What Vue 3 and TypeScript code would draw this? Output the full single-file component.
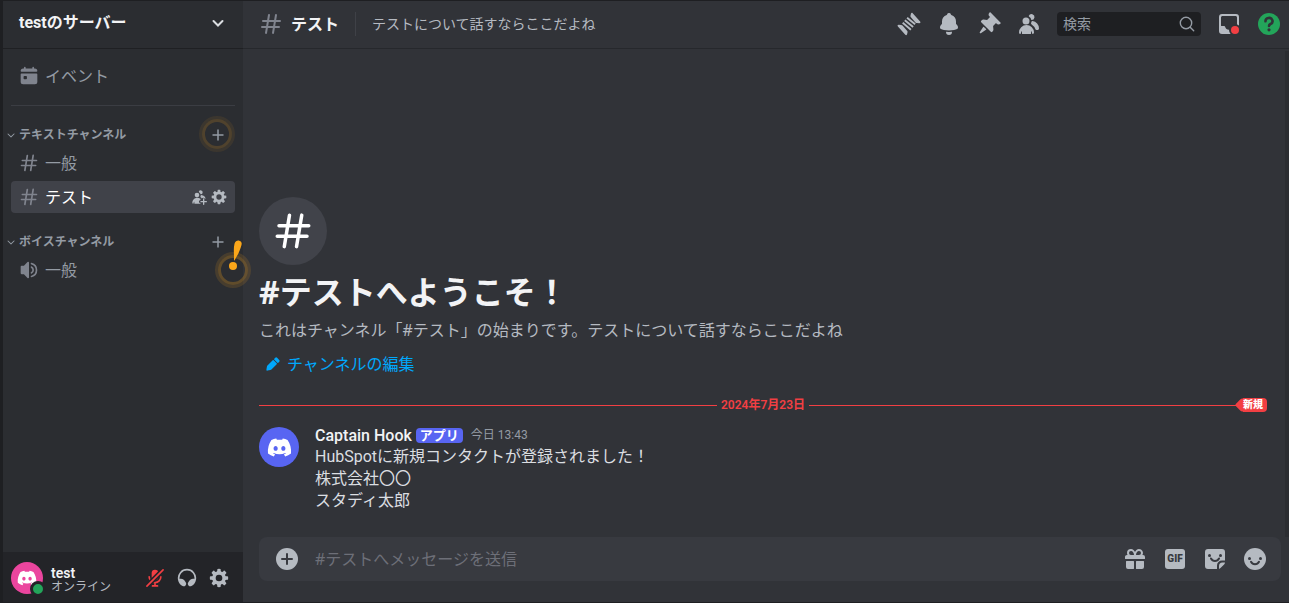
<script setup lang="ts">
import { ref } from 'vue'

interface Channel {
  id: string
  name: string
  kind: 'text' | 'voice'
}

interface Category {
  name: string
  hinted: boolean
  channels: Channel[]
}

interface Tool {
  label: string
  paths: string[]
}

const icons = {
  hash: 'M10.99 3.16A1 1 0 1 0 9 2.84L8.15 8H4a1 1 0 0 0 0 2h3.82l-.67 4H3a1 1 0 1 0 0 2h3.82l-.8 4.84a1 1 0 0 0 1.97.32L8.85 16h4.97l-.8 4.84a1 1 0 0 0 1.97.32l.86-5.16H20a1 1 0 1 0 0-2h-3.82l.67-4H21a1 1 0 1 0 0-2h-3.82l.8-4.84a1 1 0 1 0-1.97-.32L15.15 8h-4.97l.8-4.84ZM14.15 14l.67-4H9.85l-.67 4h4.97Z',
  speaker:
    'M12 3a1 1 0 0 0-1-1h-.06a1 1 0 0 0-.74.32L5.92 7H3a1 1 0 0 0-1 1v8a1 1 0 0 0 1 1h2.92l4.28 4.68a1 1 0 0 0 .74.32H11a1 1 0 0 0 1-1V3ZM15.1 20.75c-.58.14-1.1-.33-1.1-.92v-.03c0-.5.37-.92.85-1.05a7 7 0 0 0 0-13.5A1.11 1.11 0 0 1 14 4.2v-.03c0-.6.52-1.06 1.1-.92a9 9 0 0 1 0 17.5ZM15.16 16.51c-.57.28-1.16-.2-1.16-.83v-.14c0-.43.28-.8.63-1.02a3 3 0 0 0 0-5.04c-.35-.23-.63-.6-.63-1.02v-.14c0-.63.59-1.1 1.16-.83a5 5 0 0 1 0 9.02Z',
  gear: 'M10.56 1.1c-.46.05-.7.53-.64.98.18 1.16-.19 2.2-.98 2.53-.8.33-1.79-.15-2.49-1.1-.27-.36-.78-.52-1.14-.24-.77.59-1.45 1.27-2.04 2.04-.28.36-.12.87.24 1.14.96.7 1.43 1.7 1.1 2.49-.33.8-1.37 1.16-2.53.98-.45-.07-.93.18-.99.64a11.1 11.1 0 0 0 0 2.88c.06.46.54.7.99.64 1.16-.18 2.2.19 2.53.98.33.8-.14 1.79-1.1 2.49-.36.27-.52.78-.24 1.14.59.77 1.27 1.45 2.04 2.04.36.28.87.12 1.14-.24.7-.95 1.7-1.43 2.49-1.1.8.33 1.16 1.37.98 2.53-.07.45.18.93.64.99a11.1 11.1 0 0 0 2.88 0c.46-.06.7-.54.64-.99-.18-1.16.19-2.2.98-2.53.8-.33 1.79.14 2.49 1.1.27.36.78.52 1.14.24.77-.59 1.45-1.27 2.04-2.04.28-.36.12-.87-.24-1.14-.96-.7-1.43-1.7-1.1-2.49.33-.8 1.37-1.16 2.53-.98.45.07.93-.18.99-.64a11.1 11.1 0 0 0 0-2.88c-.06-.46-.54-.7-.99-.64-1.16.18-2.2-.19-2.53-.98-.33-.8.14-1.79 1.1-2.49.36-.27.52-.78.24-1.14a11.07 11.07 0 0 0-2.04-2.04c-.36-.28-.87-.12-1.14.24-.7.96-1.7 1.43-2.49 1.1-.8-.33-1.16-1.37-.98-2.53.07-.45-.18-.93-.64-.99a11.1 11.1 0 0 0-2.88 0ZM16 12a4 4 0 1 1-8 0 4 4 0 0 1 8 0Z',
  bell: 'M9.7 2.89c.18-.07.32-.24.37-.43a2 2 0 0 1 3.86 0c.05.2.19.36.38.43A7 7 0 0 1 19 9.5v2.09c0 .12.05.24.13.33l1.1 1.22a3 3 0 0 1 .77 2.01v.28c0 .67-.34 1.29-.95 1.56-1.31.6-4 1.51-8.05 1.51-4.05 0-6.74-.91-8.05-1.5-.61-.28-.95-.9-.95-1.57v-.28a3 3 0 0 1 .77-2l1.1-1.23a.5.5 0 0 0 .13-.33V9.5a7 7 0 0 1 4.7-6.61ZM9.18 19.84A.16.16 0 0 0 9 20a3 3 0 1 0 6 0c0-.1-.09-.17-.18-.16a24.86 24.86 0 0 1-5.64 0Z',
  pin: 'M19.38 11.38a3 3 0 0 0 4.24 0l.03-.03a.5.5 0 0 0 0-.7L13.35.35a.5.5 0 0 0-.7 0l-.03.03a3 3 0 0 0 0 4.24L13 5l-2.92 2.92-3.65-.34a2 2 0 0 0-1.6.58l-.62.63a1 1 0 0 0 0 1.42l9.58 9.58a1 1 0 0 0 1.42 0l.63-.63a2 2 0 0 0 .58-1.6l-.34-3.64L19 11l.38.38ZM9.07 17.07a.5.5 0 0 1-.08.77l-5.15 3.43a.5.5 0 0 1-.63-.06l-.42-.42a.5.5 0 0 1-.06-.63L6.16 15a.5.5 0 0 1 .77-.08l2.14 2.14Z',
  membersBack:
    'M14.5 8a3 3 0 1 0-2.7-4.3c-.2.4.06.86.44 1.12a5 5 0 0 1 2.14 3.08c.01.06.06.1.12.1ZM18.44 17.27c.15.43.54.73 1 .73h1.06c.83 0 1.5-.67 1.5-1.5a7.5 7.5 0 0 0-6.5-7.43c-.55-.08-.99.38-1.1.92-.06.3-.15.6-.26.87-.23.58-.05 1.3.47 1.63a9.53 9.53 0 0 1 3.83 4.78Z',
  membersFront:
    'M12.5 9a3.5 3.5 0 1 1-7 0 3.5 3.5 0 0 1 7 0ZM2 20.5a7.5 7.5 0 0 1 15 0c0 .83-.67 1.5-1.5 1.5a.2.2 0 0 1-.2-.16c-.2-.96-.56-1.87-.88-2.54-.1-.23-.42-.15-.42.1v2.1a.5.5 0 0 1-.5.5h-8a.5.5 0 0 1-.5-.5v-2.1c0-.25-.31-.33-.42-.1-.32.67-.67 1.58-.88 2.54a.2.2 0 0 1-.2.16A1.5 1.5 0 0 1 2 20.5Z',
  threads:
    'M14 1.4c.4-.8 1.1-.9 1.7-.2l7.4 8.3c.7.8.3 1.7-.8 1.7l-2.4-.1c-.6 0-1-.2-1.4-.6l-4.6-5.2c-.5-.5-.6-1-.4-1.7ZM10 22.6c-.4.8-1.1.9-1.7.2L.9 14.5c-.7-.8-.3-1.7.8-1.7l2.4.1c.6 0 1 .2 1.4.6l4.6 5.2c.5.5.6 1 .4 1.7ZM10.7 5l8 6.6-1.2 1.5-8-6.6ZM8.4 7.5l8.3 6.8-1.2 1.5-8.3-6.8ZM6.3 10.1l8.2 6.8-1.2 1.5-8.2-6.8Z',
  logo: 'M19.73 4.87a18.2 18.2 0 0 0-4.6-1.44c-.21.4-.4.8-.58 1.21-1.69-.25-3.4-.25-5.1 0-.18-.41-.37-.82-.59-1.2-1.6.27-3.14.75-4.6 1.43A19.04 19.04 0 0 0 .96 17.7a18.43 18.43 0 0 0 5.63 2.87c.46-.62.86-1.28 1.2-1.98-.65-.25-1.29-.55-1.9-.92.17-.12.32-.24.47-.37 3.58 1.7 7.7 1.7 11.28 0l.46.37c-.6.36-1.25.67-1.9.92.35.7.75 1.35 1.2 1.98 2.03-.63 3.94-1.6 5.64-2.87.47-4.87-.78-9.09-3.3-12.83ZM8.3 15.12c-1.1 0-2-1.02-2-2.27 0-1.24.88-2.26 2-2.26s2.02 1.02 2 2.26c0 1.25-.89 2.27-2 2.27Zm7.4 0c-1.1 0-2-1.02-2-2.27 0-1.24.88-2.26 2-2.26s2.02 1.02 2 2.26c0 1.25-.88 2.27-2 2.27Z',
  chevron:
    'M5.3 9.3a1 1 0 0 1 1.4 0l5.3 5.29 5.3-5.3a1 1 0 1 1 1.4 1.42l-6 6a1 1 0 0 1-1.4 0l-6-6a1 1 0 0 1 0-1.42Z',
}

const categories: Category[] = [
  {
    name: 'テキストチャンネル',
    hinted: true,
    channels: [
      { id: 'general', name: '一般', kind: 'text' },
      { id: 'test', name: 'テスト', kind: 'text' },
    ],
  },
  {
    name: 'ボイスチャンネル',
    hinted: false,
    channels: [{ id: 'voice', name: '一般', kind: 'voice' }],
  },
]

const tools: Tool[] = [
  { label: 'スレッド', paths: [icons.threads] },
  { label: '通知設定', paths: [icons.bell] },
  { label: 'ピン留め', paths: [icons.pin] },
  { label: 'メンバーリスト', paths: [icons.membersBack, icons.membersFront] },
]

const messageLines: string[] = [
  'HubSpotに新規コンタクトが登録されました！',
  '株式会社〇〇',
  'スタディ太郎',
]

const selected = ref('test')
const query = ref('')
const draft = ref('')
</script>

<template>
  <div class="app">
    <aside class="sidebar">
      <button class="server" type="button">
        <span class="server-name">testのサーバー</span>
        <svg class="i18" viewBox="0 0 18 18" fill="none" stroke="currentColor" stroke-width="2" stroke-linecap="round">
          <path d="M4.5 7 9 11.5 13.5 7" />
        </svg>
      </button>

      <nav class="nav">
        <button class="row event" type="button">
          <svg class="i20" viewBox="0 0 24 24" fill="currentColor">
            <path d="M7 1a1 1 0 0 1 1 1v.75c0 .14.11.25.25.25h7.5c.14 0 .25-.11.25-.25V2a1 1 0 1 1 2 0v.75c0 .14.11.25.25.25H19a3 3 0 0 1 3 3 1 1 0 0 1-1 1H3a1 1 0 0 1-1-1 3 3 0 0 1 3-3h.75c.14 0 .25-.11.25-.25V2a1 1 0 0 1 1-1Z" />
            <path fill-rule="evenodd" d="M2 10a1 1 0 0 1 1-1h18a1 1 0 0 1 1 1v9a3 3 0 0 1-3 3H5a3 3 0 0 1-3-3v-9Zm3.5 3v2c0 .6.4 1 1 1h2a1 1 0 0 0 1-1v-2a1 1 0 0 0-1-1h-2a1 1 0 0 0-1 1Z" />
          </svg>
          <span>イベント</span>
        </button>
        <hr class="rule" />

        <section v-for="cat in categories" :key="cat.name" class="category">
          <header class="cat-head">
            <button class="cat-name" type="button">
              <svg class="i12" viewBox="0 0 24 24" fill="currentColor"><path :d="icons.chevron" /></svg>
              <span>{{ cat.name }}</span>
            </button>
            <button class="add" type="button" aria-label="チャンネルを作成">
              <svg class="i18" viewBox="0 0 18 18" fill="none" stroke="currentColor" stroke-width="1.5">
                <path d="M9 3.5v11M3.5 9h11" />
              </svg>
              <span v-if="cat.hinted" class="ring"></span>
            </button>
          </header>
          <div
            v-for="ch in cat.channels"
            :key="ch.id"
            class="row channel"
            :class="{ active: ch.id === selected }"
          >
            <button class="channel-link" type="button" @click="selected = ch.id">
              <svg class="i20" viewBox="0 0 24 24" fill="currentColor">
                <path fill-rule="evenodd" :d="ch.kind === 'text' ? icons.hash : icons.speaker" />
              </svg>
              <span>{{ ch.name }}</span>
            </button>
            <template v-if="ch.id === selected">
              <button class="mini" type="button" aria-label="招待を作成">
                <svg class="i16" viewBox="0 0 24 24" fill="currentColor">
                  <path d="M14.5 8a3 3 0 1 0-2.7-4.3c-.2.4.06.86.44 1.12a5 5 0 0 1 2.14 3.08c.01.06.06.1.12.1ZM14.3 10.5c.2-.9.7-1.5 1.4-1.4 3 .5 5.3 2 6.1 4.7.2.8-.5 1-1.2.4-1.2-1.2-3.2-1.5-4.4.1-.5-.9-1.2-1.6-2.1-2.3Z" />
                  <path d="M12.5 9a3.5 3.5 0 1 1-7 0 3.5 3.5 0 0 1 7 0ZM2 20.5c0-4.2 3.4-7.5 7.5-7.5 1.7 0 3.3.6 4.5 1.5.7.6.4 2-.5 2.3a2.3 2.3 0 0 0 .5 4.5c.6.1.5.7 0 .7H5.5a.5.5 0 0 1-.5-.5v-2.1c0-.25-.31-.33-.42-.1-.32.67-.67 1.58-.88 2.54C3.5 22.5 2 21.5 2 20.5Z" />
                  <path d="M19 14a1 1 0 0 1 1 1v3h3a1 1 0 1 1 0 2h-3v3a1 1 0 1 1-2 0v-3h-3a1 1 0 1 1 0-2h3v-3a1 1 0 0 1 1-1Z" />
                </svg>
              </button>
              <button class="mini" type="button" aria-label="チャンネルの編集">
                <svg class="i16" viewBox="0 0 24 24" fill="currentColor"><path fill-rule="evenodd" :d="icons.gear" /></svg>
              </button>
            </template>
            <span v-if="ch.kind === 'voice'" class="callout">
              <span class="ring"></span>
              <svg class="bang" viewBox="0 0 16 32" fill="#faa61a">
                <path d="M8.5 3.8C9.3 1.3 11.2.2 13.3.7c2 .5 2.800 2.100 2.200 4.200-1.100 4.600-3.700 10.200-6.900 15.300-.3.5-.7.3-.6-.2C8.100 14 7.300 8.500 8.500 3.800Z" />
                <circle cx="7" cy="26" r="4" />
              </svg>
            </span>
          </div>
        </section>
      </nav>

      <footer class="user">
        <button class="me" type="button">
          <span class="avatar pink">
            <svg viewBox="0 0 24 24" fill="#fff"><path fill-rule="evenodd" :d="icons.logo" /></svg>
            <span class="status"></span>
          </span>
          <span class="who">
            <strong>test</strong>
            <span>オンライン</span>
          </span>
        </button>
        <button class="ctl muted" type="button" aria-label="ミュート解除">
          <svg class="i20" viewBox="0 0 24 24">
            <path fill="currentColor" d="M12 2a4 4 0 0 1 4 4v4.5a4 4 0 0 1-8 0V6a4 4 0 0 1 4-4Z" />
            <path fill="none" stroke="currentColor" stroke-width="2" stroke-linecap="round" d="M5 10.5a7 7 0 0 0 14 0M12 17.5V21M9 21.5h6" />
            <path stroke="#232428" stroke-width="6" d="M1 23 23 1" />
            <path stroke="currentColor" stroke-width="2" stroke-linecap="round" d="M2.3 21.7 21.7 2.3" />
          </svg>
        </button>
        <button class="ctl" type="button" aria-label="スピーカーミュート">
          <svg class="i20" viewBox="0 0 24 24" fill="currentColor">
            <path d="M12 3a9 9 0 0 0-8.95 10h1.87a5 5 0 0 1 4.1 2.13l1.37 1.97a3.1 3.1 0 0 1-.17 3.78 2.85 2.85 0 0 1-3.55.74 11 11 0 1 1 10.66 0c-1.27.71-2.73.23-3.55-.74a3.1 3.1 0 0 1-.17-3.78l1.38-1.97a5 5 0 0 1 4.1-2.13h1.86A9 9 0 0 0 12 3Z" />
          </svg>
        </button>
        <button class="ctl" type="button" aria-label="ユーザー設定">
          <svg class="i20" viewBox="0 0 24 24" fill="currentColor"><path fill-rule="evenodd" :d="icons.gear" /></svg>
        </button>
      </footer>
    </aside>

    <main class="main">
      <header class="topbar">
        <svg class="i24 dim" viewBox="0 0 24 24" fill="currentColor"><path fill-rule="evenodd" :d="icons.hash" /></svg>
        <h2 class="title">テスト</h2>
        <p class="topic">テストについて話すならここだよね</p>
        <div class="tools">
          <button v-for="tool in tools" :key="tool.label" class="tool" type="button" :aria-label="tool.label">
            <svg class="i24" viewBox="0 0 24 24" fill="currentColor">
              <path v-for="d in tool.paths" :key="d" :d="d" />
            </svg>
          </button>
          <label class="search">
            <input v-model="query" type="text" placeholder="検索" aria-label="検索" />
            <svg class="i16" viewBox="0 0 16 16" fill="none" stroke="currentColor" stroke-width="1.4" stroke-linecap="round">
              <circle cx="7" cy="7" r="5.7" />
              <path d="m11.2 11.2 3.5 3.5" />
            </svg>
          </label>
          <button class="tool" type="button" aria-label="受信ボックス">
            <svg class="i24" viewBox="0 0 24 24">
              <path fill="currentColor" fill-rule="evenodd" d="M5 2a3 3 0 0 0-3 3v14a3 3 0 0 0 3 3h14a3 3 0 0 0 3-3V5a3 3 0 0 0-3-3H5ZM4 5.5C4 4.7 4.7 4 5.5 4h13c.8 0 1.5.7 1.5 1.5v8c0 .3-.2.5-.5.5h-2.7a1 1 0 0 0-1 .8 4 4 0 0 1-7.7 0 1 1 0 0 0-1-.8H4.5a.5.5 0 0 1-.5-.5v-8Z" />
              <circle cx="18" cy="18" r="6" fill="#313338" />
              <circle cx="18" cy="18" r="4" fill="#f23f43" />
            </svg>
          </button>
          <button class="tool" type="button" aria-label="ヘルプ">
            <svg class="i24" viewBox="0 0 24 24">
              <circle cx="12" cy="12" r="11" fill="#23a55a" />
              <path fill="none" stroke="#313338" stroke-width="2.6" stroke-linecap="round" d="M8.5 9.300a3.500 3.200 0 1 1 5 2.700c-1 .5-1.500 1-1.500 1.900" />
              <circle cx="12" cy="17.800" r="1.600" fill="#313338" />
            </svg>
          </button>
        </div>
      </header>

      <div class="scroll">
        <section class="welcome">
          <span class="bubble">
            <svg viewBox="0 0 24 24" fill="currentColor"><path fill-rule="evenodd" :d="icons.hash" /></svg>
          </span>
          <h1>#テストへようこそ！</h1>
          <p>これはチャンネル「#テスト」の始まりです。テストについて話すならここだよね</p>
          <button class="edit" type="button">
            <svg class="i16" viewBox="0 0 24 24" fill="currentColor">
              <path d="m13.96 5.46 4.58 4.58a1 1 0 0 0 1.42 0l1.38-1.38a2 2 0 0 0 0-2.82l-3.18-3.18a2 2 0 0 0-2.82 0l-1.38 1.38a1 1 0 0 0 0 1.42ZM2.11 20.16l.73-4.22a3 3 0 0 1 .83-1.61l7.87-7.87a1 1 0 0 1 1.42 0l4.58 4.58a1 1 0 0 1 0 1.42l-7.87 7.87a3 3 0 0 1-1.6.83l-4.23.73a1.5 1.5 0 0 1-1.73-1.73Z" />
            </svg>
            <span>チャンネルの編集</span>
          </button>
        </section>

        <div class="divider">
          <time class="date" datetime="2024-07-23">2024年7月23日</time>
          <span class="fresh">
            <svg viewBox="0 0 8 13" fill="#f23f43"><path d="M8 0H7.5C6.5 0 5.8.3 5.2 1L.8 5.6c-.5.5-.5 1.3 0 1.8L5.2 12c.6.7 1.3 1 2.3 1H8Z" /></svg>
            <b>新規</b>
          </span>
        </div>

        <article class="message">
          <span class="avatar blurple">
            <svg viewBox="0 0 24 24" fill="#fff"><path fill-rule="evenodd" :d="icons.logo" /></svg>
          </span>
          <div>
            <header class="byline">
              <span class="author">Captain Hook</span>
              <span class="tag">アプリ</span>
              <time>今日 13:43</time>
            </header>
            <p v-for="line in messageLines" :key="line">{{ line }}</p>
          </div>
        </article>
      </div>

      <form class="composer" @submit.prevent>
        <button class="tool" type="button" aria-label="ファイルを追加">
          <svg class="i24" viewBox="0 0 24 24">
            <circle cx="12" cy="12" r="11" fill="currentColor" />
            <path stroke="#383a40" stroke-width="2" stroke-linecap="round" d="M12 7v10M7 12h10" />
          </svg>
        </button>
        <input v-model="draft" type="text" placeholder="#テストへメッセージを送信" aria-label="メッセージ" />
        <button class="tool" type="button" aria-label="ギフト">
          <svg class="i24" viewBox="0 0 24 24" fill="currentColor">
            <path fill-rule="evenodd" d="M4 6a4 4 0 0 1 4-4h.09c1.8 0 3.34 1.39 3.91 3.1.57-1.71 2.11-3.1 3.91-3.1H16a4 4 0 0 1 3.46 6H20a2 2 0 0 1 2 2v1.5a.5.5 0 0 1-.5.5h-19a.5.5 0 0 1-.5-.5V10c0-1.1.9-2 2-2h.54A3.98 3.98 0 0 1 4 6Zm4-2a2 2 0 1 0 0 4h3c0-2-1.3-4-3-4Zm8 0c-1.7 0-3 2-3 4h3a2 2 0 1 0 0-4Z" />
            <path d="M3 14.5c0-.3.2-.5.5-.5h7c.3 0 .5.2.5.5v7c0 .3-.2.5-.5.5H5a2 2 0 0 1-2-2ZM13 14.5c0-.3.2-.5.5-.5h7c.3 0 .5.2.5.5V20a2 2 0 0 1-2 2h-5.500a.5.5 0 0 1-.5-.5Z" />
          </svg>
        </button>
        <button class="tool" type="button" aria-label="GIF">
          <span class="gif">GIF</span>
        </button>
        <button class="tool" type="button" aria-label="スタンプ">
          <svg class="i24" viewBox="0 0 24 24">
            <path fill="currentColor" d="M5 2h14a3 3 0 0 1 3 3v8.5h-3a5 5 0 0 0-5 5V22H5a3 3 0 0 1-3-3V5a3 3 0 0 1 3-3Z" />
            <path fill="currentColor" d="M22 15.5c0 .8-.3 1.4-.9 2l-3.6 3.6c-.5.5-1 .8-1.500.9v-3a3.500 3.500 0 0 1 3.500-3.500Z" />
            <path fill="none" stroke="#383a40" stroke-width="2" stroke-linecap="round" d="M8 11.500c1.700 3.300 6.300 3.300 8 0" />
            <circle cx="6.5" cy="8.5" r="1.5" fill="#383a40" />
            <circle cx="17.5" cy="8.5" r="1.5" fill="#383a40" />
          </svg>
        </button>
        <button class="tool" type="button" aria-label="絵文字">
          <svg class="i24" viewBox="0 0 24 24">
            <circle cx="12" cy="12" r="11" fill="currentColor" />
            <path fill="none" stroke="#383a40" stroke-width="2" stroke-linecap="round" d="M8 14.800c1.700 3.300 6.300 3.300 8 0" />
            <circle cx="6.5" cy="11.5" r="1.5" fill="#383a40" />
            <circle cx="17.5" cy="11.5" r="1.5" fill="#383a40" />
          </svg>
        </button>
      </form>
    </main>
  </div>
</template>

<style>
body {
  background: #1e1f22;
}
</style>

<style scoped>
* {
  box-sizing: border-box;
}

.app {
  display: flex;
  height: 100vh;
  padding: 1px 0 1px 3px;
  background: #1e1f22;
  color: #dbdee1;
  font-family: 'Noto Sans', 'Noto Sans CJK JP', sans-serif;
  font-size: 16px;
  line-height: 20px;
  overflow: hidden;
}

button,
input {
  margin: 0;
  padding: 0;
  border: 0;
  outline: 0;
  background: none;
  color: inherit;
  font: inherit;
  text-align: left;
}

button {
  display: flex;
  align-items: center;
  cursor: pointer;
}

h1,
h2,
p {
  margin: 0;
}

svg {
  display: block;
  flex: none;
}

.i12 { width: 12px; height: 12px; }
.i16 { width: 16px; height: 16px; }
.i18 { width: 18px; height: 18px; }
.i20 { width: 20px; height: 20px; }
.i24 { width: 24px; height: 24px; }

.server,
.user,
.divider,
.message {
  font-family: Roboto, 'Noto Sans CJK JP', sans-serif;
}

.sidebar {
  display: flex;
  flex: none;
  flex-direction: column;
  width: 240px;
  background: #2b2d31;
}

.server {
  justify-content: space-between;
  height: 48px;
  padding: 0 16px 3px;
  border-bottom: 1px solid #1f2023;
  color: #f2f3f5;
  font-weight: 700;
}

.server .i18 {
  color: #dbdee1;
}

.nav {
  flex: 1;
  padding: 11px 8px 0;
}

.row {
  display: flex;
  align-items: center;
  width: 100%;
  height: 32px;
  padding: 0 8px;
  border-radius: 4px;
  color: #949ba4;
}

.event {
  gap: 6px;
}

.row .i20 {
  color: #80848e;
}

.rule {
  height: 1px;
  margin: 13px 0 0;
  border: 0;
  background: #3b3d43;
}

.category {
  margin-bottom: 12px;
}

.cat-head {
  display: flex;
  align-items: center;
  justify-content: space-between;
  height: 25px;
  margin: 16px 8px 0 -6px;
  color: #949ba4;
  font-size: 12px;
  font-weight: 600;
}

.cat-name {
  gap: 2px;
}

.add {
  position: relative;
}

.channel {
  position: relative;
  gap: 4px;
  margin-bottom: 2px;
}

.channel-link {
  flex: 1;
  gap: 6px;
  height: 100%;
}

.channel.active {
  background: #404249;
  color: #fff;
}

.mini {
  color: #b5bac1;
}

.ring {
  position: absolute;
  top: 50%;
  left: 50%;
  width: 36px;
  height: 36px;
  margin: -19px 0 0 -19px;
  border: 3px solid rgba(250, 166, 26, 0.08);
  border-radius: 50%;
  box-shadow: inset 0 0 0 3px rgba(250, 166, 26, 0.18);
  pointer-events: none;
}

.callout {
  position: absolute;
  top: 50%;
  right: 2px;
  width: 0;
  height: 0;
}

.callout .ring {
  margin: -18px 0 0 -18px;
  border-color: rgba(250, 166, 26, 0.14);
  box-shadow: inset 0 0 0 3px rgba(250, 166, 26, 0.26);
}

.bang {
  position: absolute;
  bottom: -2px;
  left: -7px;
  width: 16px;
  height: 32px;
}

.user {
  display: flex;
  align-items: center;
  height: 50px;
  padding: 2px 8px 0;
  background: #232428;
}

.me {
  flex: 1;
  gap: 8px;
}

.avatar {
  position: relative;
  display: grid;
  flex: none;
  place-items: center;
  border-radius: 50%;
}

.pink {
  width: 32px;
  height: 32px;
  background: #eb459e;
}

.pink svg {
  width: 20px;
}

.status {
  position: absolute;
  right: -3px;
  bottom: -3px;
  width: 16px;
  height: 16px;
  border: 3px solid #232428;
  border-radius: 50%;
  background: #23a55a;
}

.who {
  display: flex;
  flex-direction: column;
  padding-top: 3px;
  color: #b5bac1;
  font-size: 12px;
  line-height: 14px;
}

.who strong {
  color: #f2f3f5;
  font-size: 14px;
  font-weight: 600;
}

.ctl {
  justify-content: center;
  width: 32px;
  height: 32px;
  color: #b5bac1;
}

.muted {
  color: #f23f43;
}

.main {
  display: flex;
  flex: 1;
  flex-direction: column;
  min-width: 0;
  background: #313338;
}

.topbar {
  display: flex;
  flex: none;
  align-items: center;
  height: 48px;
  padding: 0 8px 2px 16px;
  border-bottom: 1px solid #26282c;
}

.dim {
  color: #80848e;
}

.title {
  margin-left: 8px;
  color: #f2f3f5;
  font-size: 16px;
  font-weight: 700;
}

.topic {
  flex: 1;
  margin-left: 16px;
  padding-left: 16px;
  border-left: 1px solid #3f4147;
  overflow: hidden;
  color: #b5bac1;
  font-size: 14px;
  line-height: 24px;
  text-overflow: ellipsis;
  white-space: nowrap;
}

.tools {
  display: flex;
  align-items: center;
  gap: 16px;
}

.tool {
  color: #b5bac1;
}

.search {
  display: flex;
  align-items: center;
  width: 144px;
  height: 24px;
  padding: 0 6px;
  border-radius: 4px;
  background: #1e1f22;
  color: #949ba4;
  font-size: 14px;
}

.search input {
  flex: 1;
  min-width: 0;
}

input::placeholder {
  color: #949ba4;
  opacity: 1;
}

.scroll {
  display: flex;
  flex: 1;
  flex-direction: column;
  justify-content: flex-end;
  min-height: 0;
  margin-top: 2px;
  padding: 0 18px 25px 16px;
  border-right: 4px solid #2b2d31;
}

.bubble {
  display: grid;
  place-items: center;
  width: 68px;
  height: 68px;
  border-radius: 50%;
  background: #41434a;
  color: #fff;
}

.bubble svg {
  width: 42px;
}

.welcome h1 {
  margin: 7px 0 8px;
  color: #f2f3f5;
  font-size: 32px;
  font-weight: 700;
  line-height: 40px;
}

.welcome p {
  color: #b5bac1;
}

.edit {
  gap: 6px;
  height: 32px;
  margin-top: 8px;
  padding: 0 6px;
  color: #00a8fc;
}

.divider {
  position: relative;
  display: flex;
  align-items: center;
  height: 14px;
  margin-top: 18px;
  color: #f23f43;
  font-size: 12px;
  font-weight: 600;
  line-height: 14px;
}

.divider::before,
.divider::after {
  content: '';
  flex: 1;
  height: 1px;
  background: #f23f43;
}

.date {
  padding: 0 4px;
}

.fresh {
  position: absolute;
  top: 0;
  right: 0;
  display: flex;
}

.fresh svg {
  width: 8px;
  height: 14px;
}

.fresh b {
  padding: 0 4px 0 0;
  border-radius: 0 4px 4px 0;
  background: #f23f43;
  color: #fff;
  font-size: 10px;
  line-height: 13px;
}

.message {
  display: flex;
  gap: 16px;
  margin-top: 13px;
  line-height: 22px;
}

.blurple {
  width: 40px;
  height: 40px;
  margin-top: 2px;
  background: #5865f2;
}

.blurple svg {
  width: 25px;
}

.byline {
  display: flex;
  align-items: center;
  line-height: 21px;
}

.author {
  color: #f2f3f5;
  font-weight: 500;
}

.tag {
  margin: 0 8px 0 4px;
  padding: 0 4px;
  border-radius: 4px;
  background: #5865f2;
  color: #fff;
  font-size: 13px;
  font-weight: 600;
  line-height: 15px;
}

.byline time {
  color: #949ba4;
  font-size: 12px;
}

.composer {
  display: flex;
  flex: none;
  align-items: center;
  gap: 16px;
  height: 44px;
  margin: 0 8px 21px 16px;
  padding: 0 14px 0 16px;
  border-radius: 8px;
  background: #383a40;
}

.composer input {
  flex: 1;
  min-width: 0;
}

.composer input::placeholder {
  color: #6d6f78;
}

.gif {
  display: block;
  width: 20px;
  height: 20px;
  margin: 0 2px;
  border-radius: 3px;
  background: #b5bac1;
  color: #383a40;
  font-family: Roboto, sans-serif;
  font-size: 10px;
  font-weight: 900;
  line-height: 20px;
  text-align: center;
}
</style>
